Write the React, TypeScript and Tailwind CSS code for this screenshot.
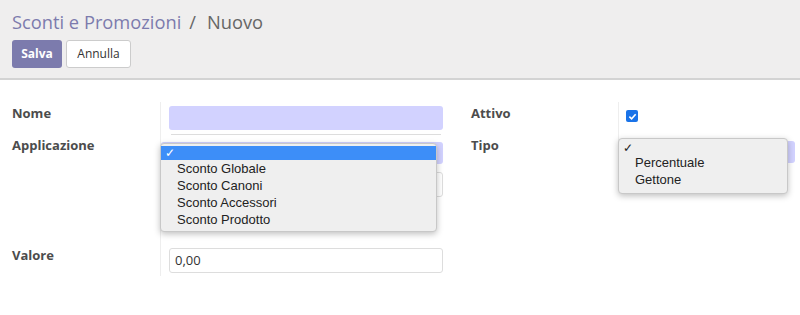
import React from 'react';

const font = "font-['Open_Sans','DejaVu_Sans',sans-serif]";
const menuFont = "font-['Liberation_Sans',Arial,sans-serif]";

const Label: React.FC<{ children?: React.ReactNode; w?: string }> = ({ children, w = 'w-[148px]' }) => (
  <div className={`${w} shrink-0 pt-[2px] text-[13px] font-bold text-[#4c4c4c]`}>{children}</div>
);

export default function App() {
  return (
    <div className={`w-[800px] h-[315px] bg-white overflow-hidden relative ${font}`}>
      {/* Control panel */}
      <div className="h-[80px] bg-[#efeeee] border-b-2 border-[#d3d3d3] pl-3 pt-[9px]">
        <div className="text-[18.3px] leading-[26px] text-[#666]">
          <span className="text-[#7c7bad]">Sconti e Promozioni</span>
          <span className="ml-[8px]">/</span>
          <span className="ml-[11px]">Nuovo</span>
        </div>
        <div className="flex gap-[4px] mt-[5px]">
          <button className="w-[50px] h-[28px] rounded-[3px] bg-[#7c7bad] text-white text-[12px] font-bold">Salva</button>
          <button className="w-[65px] h-[28px] rounded-[3px] bg-white border border-[#ccc] text-[#333] text-[12px]">Annulla</button>
        </div>
      </div>

      {/* Form */}
      <div className="flex pl-3 pr-[5px] pt-[22px]">
        <div className="w-[431px]">
          <div className="flex h-[32px]">
            <Label>Nome</Label>
            <div className="flex-1 border-l border-[#eee] pl-2 pt-[4px]">
              <div className="h-[24px] rounded-[3px] bg-[#d2d2ff]" />
              <div className="h-px bg-[#ddd] mt-[4px] mx-[2px]" />
            </div>
          </div>
          <div className="flex h-[34px]">
            <Label>Applicazione</Label>
            <div className="flex-1 border-l border-[#eee] pt-[8px]">
              <div className="h-[22px] rounded-[3px] bg-[#d2d2ff]" />
            </div>
          </div>
          <div className="flex h-[76px]">
            <Label />
            <div className="flex-1 border-l border-[#eee] pl-2 pt-[4px]">
              <div className="h-[25px] rounded-[3px] border border-[#ddd] bg-white" />
            </div>
          </div>
          <div className="flex h-[32px]">
            <Label>Valore</Label>
            <div className="flex-1 border-l border-[#eee] pl-2 pt-[4px]">
              <div className="h-[25px] rounded-[3px] border border-[#ddd] bg-white px-[5px] text-[13px] leading-[23px] text-[#333]">0,00</div>
            </div>
          </div>
        </div>

        <div className="w-[28px]" />

        <div className="flex-1">
          <div className="flex h-[32px]">
            <Label w="w-[147px]">Attivo</Label>
            <div className="flex-1 border-l border-[#eee] pl-[7px] pt-[8px]">
              <div className="w-[12px] h-[12px] rounded-[2px] bg-[#1a73e8] flex items-center justify-center">
                <svg width="9" height="9" viewBox="0 0 10 10"><path d="M1.5 5.2 L4 7.5 L8.5 2.5" fill="none" stroke="white" strokeWidth="1.8" /></svg>
              </div>
            </div>
          </div>
          <div className="flex h-[40px]">
            <Label w="w-[147px]">Tipo</Label>
            <div className="flex-1 border-l border-[#eee] pt-[7px]">
              <div className="h-[22px] rounded-[3px] bg-[#d2d2ff]" />
            </div>
          </div>
        </div>
      </div>

      {/* Applicazione dropdown */}
      <div className={`absolute left-[160px] top-[143px] w-[277px] h-[89px] rounded-[4px] bg-[#efefef] border border-[#c8c8c8] shadow-[0_2px_6px_rgba(0,0,0,0.25)] pt-[2px] ${menuFont} text-[13px] text-[#222]`}>
        <div className="h-[14px] bg-[#3d8ef8] text-white pl-[4px] leading-[14px] text-[12px]">✓</div>
        <div className="pl-[16px] leading-[17px]">Sconto Globale</div>
        <div className="pl-[16px] leading-[17px]">Sconto Canoni</div>
        <div className="pl-[16px] leading-[17px]">Sconto Accessori</div>
        <div className="pl-[16px] leading-[17px]">Sconto Prodotto</div>
      </div>

      {/* Tipo dropdown */}
      <div className={`absolute left-[618px] top-[138px] w-[170px] h-[56px] rounded-[4px] bg-[#efefef] border border-[#c8c8c8] shadow-[0_2px_6px_rgba(0,0,0,0.25)] pt-[1px] ${menuFont} text-[13px] text-[#222]`}>
        <div className="h-[14px] pl-[4px] leading-[16px] text-[12px]">✓</div>
        <div className="pl-[16px] leading-[17px]">Percentuale</div>
        <div className="pl-[16px] leading-[17px]">Gettone</div>
      </div>
    </div>
  );
}
